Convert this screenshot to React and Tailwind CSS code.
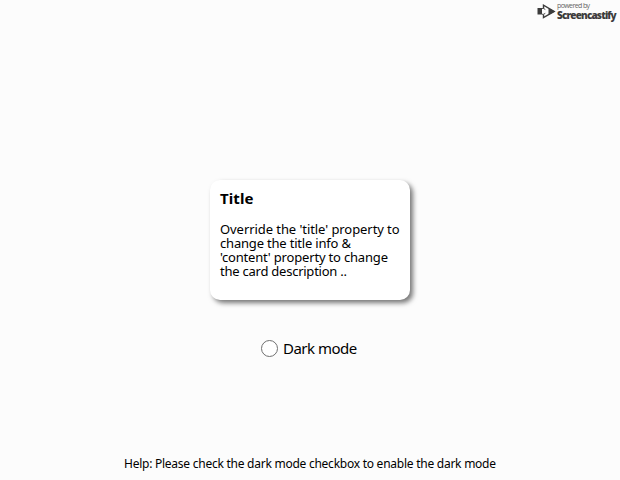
function Brand() {
  return (
    <header className="flex h-[24px] shrink-0 justify-end pt-[2px] pr-[3px] text-[#3c3c3c]">
      <svg className="mt-[2px] h-[15px] w-[19px]" viewBox="0 0 19 15" fill="none" stroke="currentColor">
        <path d="M0.5 4H5V10.5H0.5Z" fill="currentColor" stroke="none" />
        <path d="M6.5 4.5V1.2L17.2 7.4L6.5 13.6V10.5" strokeWidth="1.4" />
        <path d="M11.5 3.9V10.9L18 7.4Z" fill="currentColor" stroke="none" />
        <path d="M5 4.5H6.5L8.3 5.5M5 10.3H6.5L8.3 9.3" strokeWidth="0.9" />
      </svg>
      <div className="w-[61px] pl-px whitespace-nowrap font-['Open_Sans',sans-serif]">
        <div className="text-[7px] leading-[7px] tracking-[-0.6px] text-[#666]">powered by</div>
        <div className="text-[10px] leading-[12px] font-extrabold tracking-[-0.84px]">Screencastify</div>
      </div>
    </header>
  );
}

function Card() {
  return (
    <section className="h-[120px] w-[200px] rounded-[10px] bg-white px-[10px] pt-[9px] whitespace-nowrap shadow-[3px_3px_5px_#777]">
      <h1 className="text-[15px] leading-[18px] font-bold tracking-[0.1px]">Title</h1>
      <p className="mt-[15px] text-[13px] leading-[14px]">
        <span className="tracking-[-0.07px]">Override the 'title' property to</span>
        <br />
        <span className="tracking-[-0.19px]">change the title info &amp;</span>
        <br />
        <span className="tracking-[-0.18px]">'content' property to change</span>
        <br />
        <span className="tracking-[-0.24px]">the card description ..</span>
      </p>
    </section>
  );
}

export default function App() {
  return (
    <main className="flex h-[480px] w-[620px] flex-col overflow-hidden bg-[#fcfcfc] font-['Noto_Sans',sans-serif] text-black">
      <Brand />
      <div className="flex grow flex-col items-center pt-[156px]">
        <Card />
        <label className="mt-[38px] flex h-[20px] w-[98px] items-center gap-[5px] whitespace-nowrap">
          <input type="checkbox" className="size-[17px] shrink-0 appearance-none rounded-full border border-[#707070] bg-white" />
          <span className="text-[15px] leading-[20px] tracking-[-0.5px]">Dark mode</span>
        </label>
      </div>
      <footer className="h-[25px] shrink-0 pl-[124px] text-[12px] leading-[18px] tracking-[-0.25px] whitespace-nowrap">
        Help: Please check the dark mode checkbox to enable the dark mode
      </footer>
    </main>
  );
}
